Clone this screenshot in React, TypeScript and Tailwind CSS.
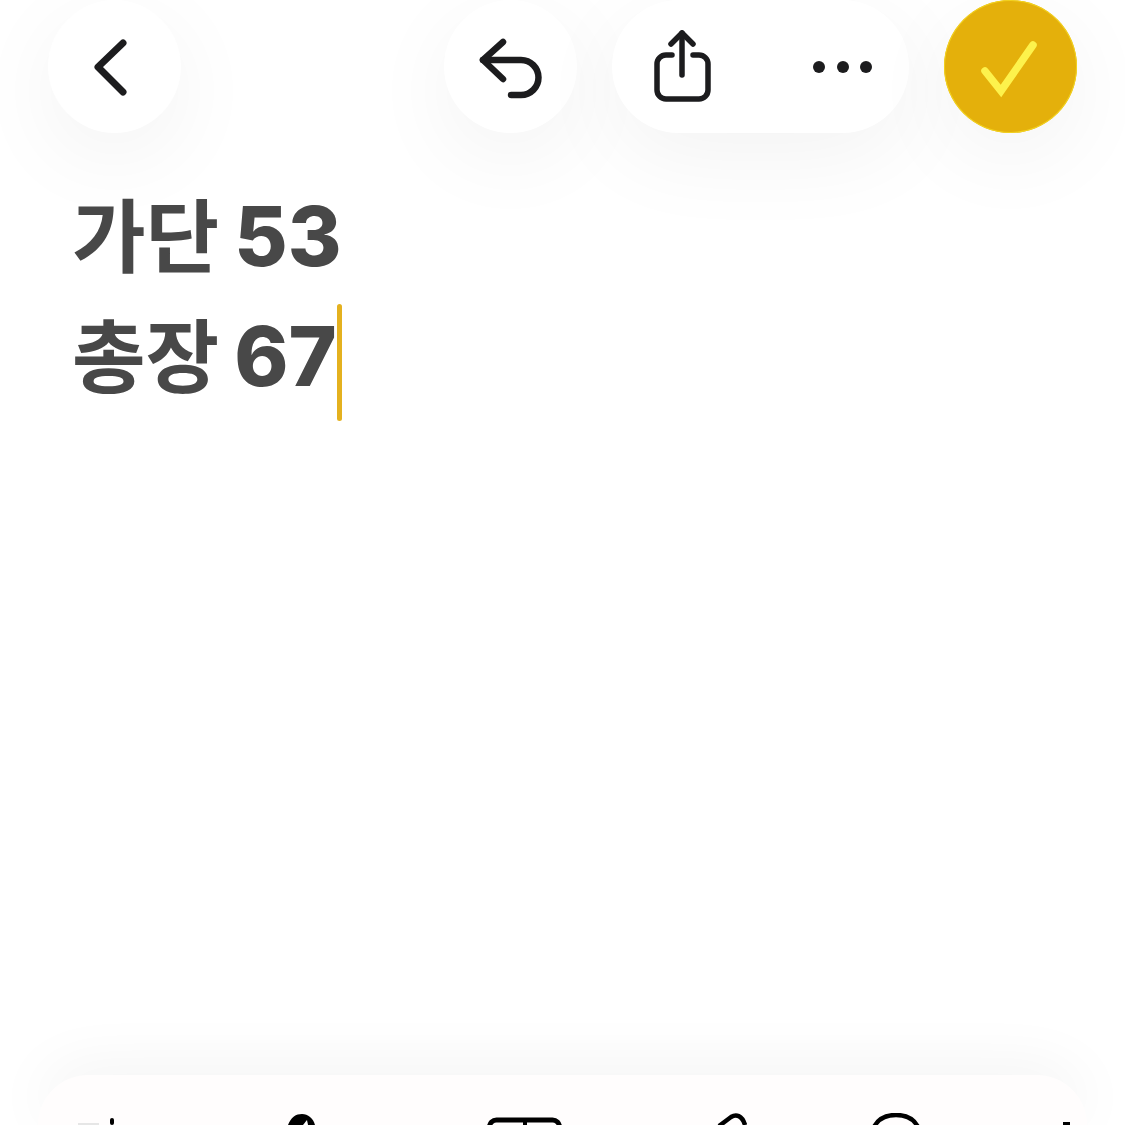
const buttonShadow = "shadow-[0_24px_90px_rgba(0,0,0,0.05)]";

function BackIcon() {
  return (
    <svg width="133" height="133" viewBox="0 0 133 133" fill="none" stroke="#1c1c1e" strokeWidth="7" strokeLinecap="round" strokeLinejoin="round">
      <path d="M75 43 50 67l25 25" />
    </svg>
  );
}

function UndoIcon() {
  return (
    <svg width="133" height="133" viewBox="0 0 133 133" fill="none" stroke="#1c1c1e" strokeWidth="6.500" strokeLinecap="round" strokeLinejoin="round">
      <path d="M59 42 39 60l20 19" />
      <path d="M39 60h38a17.500 17.500 0 0 1 0 35H67" />
    </svg>
  );
}

function ShareIcon() {
  return (
    <svg width="60" height="76" viewBox="0 0 60 76" fill="none" stroke="#1c1c1e" strokeWidth="5.500" strokeLinecap="round" strokeLinejoin="round">
      <path d="M30 4v42" />
      <path d="M19 15 30 4l11 11" />
      <path d="M20 26h-6a9 9 0 0 0-9 9v26a9 9 0 0 0 9 9h33a9 9 0 0 0 9-9V35a9 9 0 0 0-9-9h-6" />
    </svg>
  );
}

function DotsIcon() {
  return (
    <svg width="60" height="12" viewBox="0 0 60 12" fill="#1c1c1e">
      <circle cx="6" cy="6" r="6" />
      <circle cx="30" cy="6" r="6" />
      <circle cx="53" cy="6" r="6" />
    </svg>
  );
}

function CheckIcon() {
  return (
    <svg width="133" height="133" viewBox="0 0 133 133" fill="none" stroke="#fdf24c" strokeWidth="7.500" strokeLinecap="round" strokeLinejoin="miter">
      <path d="M41 71 57 91 89 45" />
    </svg>
  );
}

export default function App() {
  return (
    <div className="flex h-[1125px] flex-col overflow-hidden bg-white font-['Inter','Noto_Sans_CJK_KR',sans-serif]">
      <header className="flex items-center gap-[35px] px-12">
        <button className={`flex size-[133px] items-center justify-center rounded-full bg-white ${buttonShadow}`}>
          <BackIcon />
        </button>
        <button className={`ml-auto flex size-[133px] items-center justify-center rounded-full bg-white ${buttonShadow}`}>
          <UndoIcon />
        </button>
        <div className={`flex h-[133px] w-[297px] items-center justify-between rounded-full bg-white pl-[40px] pr-[36px] ${buttonShadow}`}>
          <ShareIcon />
          <DotsIcon />
        </div>
        <button className={`flex size-[133px] items-center justify-center rounded-full bg-[#e4b00b] ring-1 ring-inset ring-[#f2d21f] ${buttonShadow}`}>
          <CheckIcon />
        </button>
      </header>

      <main className="pl-[72px] pt-[44px] text-[80px] leading-[120px] font-bold text-[#484848]">
        <div className="flex items-start">
          가단
          <span className="ml-[15px] text-[82px] font-extrabold">53</span>
        </div>
        <div className="flex items-start">
          총장
          <span className="ml-[15px] text-[82px] font-extrabold">67</span>
          <span className="mt-[7px] h-[117px] w-[5px] rounded-full bg-[#e4b11f]" />
        </div>
      </main>

      <footer className="mx-[38px] mt-auto flex h-[50px] items-start rounded-t-[64px] bg-[#fffdfd] pl-[40px] pt-[38px] shadow-[0_-10px_60px_rgba(0,0,0,0.05)]">
        <svg width="37" height="12" viewBox="0 0 37 12" className="shrink-0">
          <rect x="0" y="10" width="21" height="2" fill="#e6e6e6" />
          <rect x="32" y="5" width="4" height="7" rx="2" fill="#000" />
        </svg>
        <svg width="27" height="12" viewBox="0 0 27 12" className="ml-[173px] shrink-0">
          <path d="M0 12C3 4 8 1 14 1s11 4 13 11z" fill="#000" />
          <path d="M15 12l4-5 1 5z" fill="#fff" />
        </svg>
        <svg width="75" height="12" viewBox="0 0 75 12" fill="none" stroke="#000" strokeWidth="5" className="ml-[172px] shrink-0">
          <path d="M2.500 14a7 7 0 0 1 7-7h56a7 7 0 0 1 7 7" />
          <path d="M38 7v5" strokeWidth="4" />
        </svg>
        <svg width="30" height="12" viewBox="0 0 30 12" fill="none" stroke="#000" strokeWidth="4.500" className="ml-[155px] shrink-0">
          <path d="M2 13 14 4c5-3 11-2 14 8" />
        </svg>
        <svg width="48" height="12" viewBox="0 0 48 12" fill="none" stroke="#000" strokeWidth="4.500" className="ml-[125px] shrink-0">
          <path d="M2 14C6 6 14 2 24 2s18 4 22 12" />
        </svg>
        <svg width="12" height="12" viewBox="0 0 12 12" className="ml-[138px] shrink-0">
          <rect x="5" y="9" width="7" height="3" fill="#000" />
        </svg>
      </footer>
    </div>
  );
}
